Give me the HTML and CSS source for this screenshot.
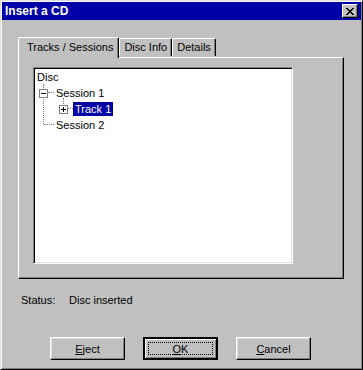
FILE: index.html
```html
<!DOCTYPE html>
<html lang="en">
<head>
  <meta charset="UTF-8" />
  <title>Insert a CD</title>
  <link rel="stylesheet" href="styles.css">
</head>
<body>
  <div class="window">
    <div class="titlebar">
      <span class="title">Insert a CD</span>
      <button class="close-btn">
        <svg width="8" height="7" viewBox="0 0 8 7" shape-rendering="crispEdges">
          <path d="M0 0h2v1h-2zM6 0h2v1h-2zM1 1h2v1h-2zM5 1h2v1h-2zM2 2h4v1h-4zM3 3h2v1h-2zM2 4h4v1h-4zM1 5h2v1h-2zM5 5h2v1h-2zM0 6h2v1h-2zM6 6h2v1h-2z" fill="#000"/>
        </svg>
      </button>
    </div>

    <div class="tabs">
      <div class="tab active">Tracks / Sessions</div>
      <div class="tab">Disc Info</div>
      <div class="tab">Details</div>
    </div>
    <div class="panel">
      <div class="tree">
        <div class="node">Disc</div>
        <div class="node level1">
          <span class="toggle minus"></span>
          <span class="label">Session 1</span>
        </div>
        <div class="node level2">
          <span class="toggle plus"></span>
          <span class="label selected">Track 1</span>
        </div>
        <div class="node level1">
          <span class="label">Session 2</span>
        </div>

        <!-- connector lines -->
        <span class="vline root-line"></span>
        <span class="hline s1-line"></span>
        <span class="hline s2-line"></span>
        <span class="vline track-line"></span>
        <span class="hline t1-line"></span>
      </div>
    </div>

    <div class="status">
      <span class="status-label">Status:</span>
      <span>Disc inserted</span>
    </div>

    <div class="buttons">
      <button class="btn"><u>E</u>ject</button>
      <button class="btn default"><span class="focus"><u>O</u>K</span></button>
      <button class="btn"><u>C</u>ancel</button>
    </div>
  </div>
</body>
</html>
```

FILE: styles.css
```css
body {
  margin: 0;
  background: #c0c0c0;
  font-family: "Liberation Sans", Arial, sans-serif;
  font-size: 11px;
  color: #000;
}

.window {
  width: 363px;
  height: 370px;
  box-sizing: border-box;
  border: 1px solid;
  border-color: #dfdfdf #000 #000 #dfdfdf;
  box-shadow: inset 1px 1px #fff, inset -1px -1px #808080;
  padding: 1px;
  background: #c0c0c0;
  display: flex;
  flex-direction: column;
}

.titlebar {
  height: 18px;
  background: #0000a8;
  display: flex;
  align-items: center;
  justify-content: space-between;
  padding: 0 3px 0 3px;
}

.title {
  color: #fff;
  font-weight: bold;
  font-size: 12px;
}

.close-btn {
  width: 16px;
  height: 14px;
  padding: 0;
  box-sizing: border-box;
  background: #c0c0c0;
  border: 1px solid;
  border-color: #fff #000 #000 #fff;
  box-shadow: inset -1px -1px #808080;
  display: flex;
  align-items: center;
  justify-content: center;
}

.tabs {
  display: flex;
  align-items: flex-end;
  margin: 17px 0 0 16px;
  position: relative;
  z-index: 1;
}

.tab {
  height: 18px;
  box-sizing: border-box;
  padding: 0 4px;
  border: 1px solid #fff;
  border-bottom: none;
  border-right-color: #000;
  border-radius: 2px 2px 0 0;
  box-shadow: inset -1px 0 #808080;
  line-height: 17px;
  margin-bottom: 1px;
}

.tab.active {
  height: 21px;
  padding: 1px 5px 0 8px;
  margin-bottom: -1px;
  background: #c0c0c0;
}

.panel {
  width: 326px;
  height: 222px;
  box-sizing: border-box;
  margin-left: 16px;
  border: 1px solid;
  border-color: #fff #000 #000 #fff;
  box-shadow: inset -1px -1px #808080;
  padding: 9px 0 0 14px;
}

.tree {
  width: 260px;
  height: 197px;
  box-sizing: border-box;
  background: #fff;
  border: 1px solid;
  border-color: #808080 #fff #fff #808080;
  box-shadow: inset 1px 1px #000, inset -1px -1px #dfdfdf;
  padding: 1px 0 0 3px;
  position: relative;
}

.node {
  height: 16px;
  display: flex;
  align-items: center;
}

.level1 {
  padding-left: 2px;
}

.level2 {
  padding-left: 22px;
}

.level1 .label {
  margin-left: 15px;
}

.level1 .toggle + .label {
  margin-left: 6px;
}

.level2 .label {
  margin-left: 5px;
}

.label {
  padding: 0 2px;
  line-height: 14px;
}

.selected {
  background: #0000a8;
  color: #fff;
}

.toggle {
  width: 9px;
  height: 9px;
  box-sizing: border-box;
  border: 1px solid #808080;
  background: #fff;
  position: relative;
  z-index: 1;
}

.toggle::before {
  content: "";
  position: absolute;
  left: 1px;
  top: 3px;
  width: 5px;
  height: 1px;
  background: #000;
}

.plus::after {
  content: "";
  position: absolute;
  left: 3px;
  top: 1px;
  width: 1px;
  height: 5px;
  background: #000;
}

.vline,
.hline {
  position: absolute;
  border: 0 dotted #808080;
}

.vline {
  border-left-width: 1px;
}

.hline {
  border-top-width: 1px;
}

.root-line {
  left: 9px;
  top: 16px;
  height: 40px;
}

.s1-line {
  left: 14px;
  top: 24px;
  width: 6px;
}

.s2-line {
  left: 10px;
  top: 56px;
  width: 10px;
}

.track-line {
  left: 29px;
  top: 30px;
  height: 6px;
}

.t1-line {
  left: 34px;
  top: 40px;
  width: 5px;
}

.status {
  display: flex;
  margin: 13px 0 0 19px;
  line-height: 16px;
}

.status-label {
  width: 48px;
}

.buttons {
  display: flex;
  gap: 18px;
  margin: 29px 0 0 48px;
}

.btn {
  width: 75px;
  height: 23px;
  box-sizing: border-box;
  padding: 0;
  font: inherit;
  color: #000;
  background: #c0c0c0;
  border: 1px solid;
  border-color: #fff #000 #000 #fff;
  box-shadow: inset -1px -1px #808080, inset 1px 1px #dfdfdf;
}

.btn.default {
  border: 2px solid;
  border-color: #000;
  box-shadow: inset 1px 1px #fff, inset -1px -1px #808080;
  padding: 3px;
}

.focus {
  display: block;
  height: 100%;
  box-sizing: border-box;
  border: 1px dotted #000;
  line-height: 13px;
}
```
